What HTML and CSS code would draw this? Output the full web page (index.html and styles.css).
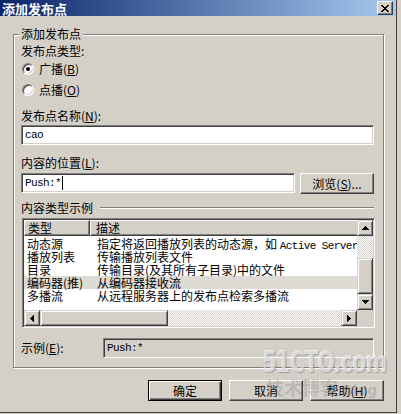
FILE: index.html
```html
<!DOCTYPE html>
<html lang="zh-CN">
<head>
    <meta charset="UTF-8">
    <title>添加发布点</title>
    <link rel="stylesheet" href="styles.css">
</head>
<body>
    <div class="dialog">
        <div class="titlebar">
            <span class="title">添加发布点</span>
            <div class="close-btn">
                <svg width="8" height="7" viewBox="0 0 8 7" shape-rendering="crispEdges">
                    <path d="M0 0h2v1H0zM6 0h2v1H6zM1 1h2v1H1zM5 1h2v1H5zM2 2h4v1H2zM3 3h2v1H3zM2 4h4v1H2zM1 5h2v1H1zM5 5h2v1H5zM0 6h2v1H0zM6 6h2v1H6z"/>
                </svg>
            </div>
        </div>

        <div class="content">
            <fieldset class="group">
                <legend>添加发布点</legend>

                <div class="label">发布点类型:</div>
                <div class="radios">
                    <div class="radio">
                        <span class="radio-box"><span class="radio-dot"></span></span>
                        <span>广播(<u>B</u>)</span>
                    </div>
                    <div class="radio">
                        <span class="radio-box"></span>
                        <span>点播(<u>O</u>)</span>
                    </div>
                </div>

                <div class="label gap-lg">发布点名称(<u>N</u>):</div>
                <div class="field full"><span class="mono">cao</span></div>

                <div class="label gap-md">内容的位置(<u>L</u>):</div>
                <div class="location-row">
                    <div class="field location"><span class="mono">Push:*</span><span class="caret"></span></div>
                    <div class="btn browse">浏览(<u>S</u>)...</div>
                </div>

                <div class="sep">
                    <span>内容类型示例</span>
                    <span class="sep-line"></span>
                </div>

                <div class="listview">
                    <div class="lv-inner">
                        <div class="lv-content">
                            <div class="lv-header">
                                <div class="hcell col1">类型</div>
                                <div class="hcell col2">描述</div>
                            </div>
                            <div class="lv-rows">
                                <div class="lv-row">
                                    <div class="col1">动态源</div>
                                    <div class="col2">指定将返回播放列表的动态源，如 <span class="mono">Active Server</span></div>
                                </div>
                                <div class="lv-row">
                                    <div class="col1">播放列表</div>
                                    <div class="col2">传输播放列表文件</div>
                                </div>
                                <div class="lv-row">
                                    <div class="col1">目录</div>
                                    <div class="col2">传输目录(及其所有子目录)中的文件</div>
                                </div>
                                <div class="lv-row selected">
                                    <div class="col1">编码器(推)</div>
                                    <div class="col2">从编码器接收流</div>
                                </div>
                                <div class="lv-row">
                                    <div class="col1">多播流</div>
                                    <div class="col2">从远程服务器上的发布点检索多播流</div>
                                </div>
                            </div>
                        </div>

                        <div class="vscroll">
                            <div class="sb-btn">
                                <svg width="7" height="4" viewBox="0 0 7 4" shape-rendering="crispEdges"><path d="M3 0h1v1h1v1h1v1h1v1H0V3h1V2h1V1h1z"/></svg>
                            </div>
                            <div class="track"></div>
                            <div class="thumb vthumb"></div>
                            <div class="sb-btn">
                                <svg width="7" height="4" viewBox="0 0 7 4" shape-rendering="crispEdges"><path d="M0 0h7v1h-1v1h-1v1h-1v1h-1V3H2V2H1V1H0z"/></svg>
                            </div>
                        </div>

                        <div class="hscroll">
                            <div class="sb-btn">
                                <svg width="4" height="7" viewBox="0 0 4 7" shape-rendering="crispEdges"><path d="M4 0v7h-1v-1h-1v-1h-1v-1H0v-1h1v-1h1v-1h1V0z"/></svg>
                            </div>
                            <div class="thumb hthumb"></div>
                            <div class="track"></div>
                            <div class="sb-btn">
                                <svg width="4" height="7" viewBox="0 0 4 7" shape-rendering="crispEdges"><path d="M0 0h1v1h1v1h1v1h1v1h-1v1h-1v1h-1v1H0z"/></svg>
                            </div>
                        </div>

                        <div class="corner"></div>
                    </div>
                </div>

                <div class="example-row">
                    <span>示例(<u>E</u>):</span>
                    <div class="field readonly"><span class="mono">Push:*</span></div>
                </div>
            </fieldset>

            <div class="buttons">
                <div class="btn default">确定</div>
                <div class="btn">取消</div>
                <div class="btn">帮助(<u>H</u>)</div>
            </div>
        </div>

        <div class="watermark">
            <div class="wm-logo">51CTO.com</div>
            <div class="wm-sub">技术博客 <span class="wm-blog">Blog</span></div>
        </div>
    </div>
</body>
</html>
```

FILE: styles.css
```css
* {
    margin: 0;
    padding: 0;
    box-sizing: border-box;
}

body {
    width: 401px;
    height: 414px;
    overflow: hidden;
    background-color: #d4d0c8;
    font-family: "Noto Sans CJK SC", sans-serif;
    font-size: 12px;
    line-height: 12px;
    color: #000;
}

u {
    text-decoration: underline;
}

.mono {
    font-family: "Liberation Mono", "Noto Sans CJK SC", monospace;
    font-size: 11px;
    letter-spacing: -0.6px;
}

.dialog {
    position: relative;
    width: 397px;
    height: 413px;
    overflow: hidden;
    background-color: #d4d0c8;
    border-right: 1px solid #404040;
    border-bottom: 1px solid #404040;
}

/* title bar */
.titlebar {
    display: flex;
    align-items: center;
    justify-content: space-between;
    height: 16px;
    padding: 0 3px 0 2px;
    background: linear-gradient(to right, #0a246a, #a6caf0);
}

.title {
    padding-top: 1px;
    color: #fff;
    font-weight: bold;
    font-size: 13px;
    line-height: 15px;
}

.close-btn {
    width: 16px;
    height: 14px;
    display: flex;
    align-items: center;
    justify-content: center;
    background-color: #d4d0c8;
    border: 1px solid;
    border-color: #fff #404040 #404040 #fff;
    box-shadow: inset -1px -1px 0 #808080;
}

/* body */
.content {
    padding: 12px 12px 0 13px;
}

.group {
    width: 371px;
    min-width: 0;
    border: 1px solid #808080;
    box-shadow: 1px 1px 0 #fff, inset 1px 1px 0 #fff;
    padding: 5px 9px 9px 7px;
}

.group legend {
    margin-left: -2px;
    padding: 0 2px;
    line-height: 12px;
    background-color: #d4d0c8;
}

.label {
    height: 12px;
    white-space: nowrap;
}

.gap-lg {
    margin-top: 14px;
}

.gap-md {
    margin-top: 12px;
}

.radios {
    margin-top: 6px;
}

.radio {
    display: flex;
    align-items: center;
    gap: 5px;
    height: 12px;
    margin-left: 1px;
}

.radio + .radio {
    margin-top: 9px;
}

.radio-box {
    width: 12px;
    height: 12px;
    display: flex;
    align-items: center;
    justify-content: center;
    border-radius: 50%;
    background-color: #fff;
    border: 1px solid;
    border-color: #808080 #fff #fff #808080;
    box-shadow: inset 1px 1px 0 #404040, inset -1px -1px 0 #d4d0c8;
}

.radio-dot {
    width: 4px;
    height: 4px;
    border-radius: 50%;
    background-color: #000;
}

/* text fields */
.field {
    height: 20px;
    display: flex;
    align-items: center;
    padding: 0 3px;
    background-color: #fff;
    border: 1px solid;
    border-color: #808080 #fff #fff #808080;
    box-shadow: inset 1px 1px 0 #404040, inset -1px -1px 0 #d4d0c8;
    white-space: nowrap;
}

.field.full {
    width: 353px;
    margin-top: 3px;
}

.location-row {
    display: flex;
    gap: 5px;
    margin-top: 4px;
}

.field.location {
    width: 274px;
}

.caret {
    width: 1px;
    height: 14px;
    margin-left: 1px;
    background-color: #000;
}

.field.readonly {
    width: 271px;
    background-color: #d4d0c8;
}

/* buttons */
.btn {
    width: 74px;
    height: 21px;
    display: flex;
    align-items: center;
    justify-content: center;
    background-color: #d4d0c8;
    border: 1px solid;
    border-color: #fff #404040 #404040 #fff;
    box-shadow: inset -1px -1px 0 #808080;
    white-space: nowrap;
}

.btn.default {
    border-color: #000;
    box-shadow: inset 1px 1px 0 #fff, inset -1px -1px 0 #404040, inset -2px -2px 0 #808080;
}

.buttons {
    display: flex;
    justify-content: flex-end;
    gap: 7px;
    margin-top: 12px;
}

/* separator */
.sep {
    display: flex;
    align-items: center;
    gap: 7px;
    height: 12px;
    margin-top: 8px;
}

.sep-line {
    flex: 1;
    height: 2px;
    border-top: 1px solid #808080;
    border-bottom: 1px solid #fff;
}

/* list view */
.listview {
    width: 353px;
    height: 110px;
    margin: 4px 0 0 1px;
    padding: 1px;
    border: 1px solid;
    border-color: #808080 #fff #fff #808080;
    box-shadow: inset 1px 1px 0 #404040, inset -1px -1px 0 #d4d0c8;
}

.lv-inner {
    display: grid;
    grid-template-columns: 1fr 16px;
    grid-template-rows: 1fr 16px;
    height: 100%;
}

.lv-content {
    background-color: #fff;
    overflow: hidden;
}

.lv-header {
    display: flex;
    height: 16px;
}

.hcell {
    height: 16px;
    line-height: 14px;
    background-color: #d4d0c8;
    border: 1px solid;
    border-color: #fff #404040 #404040 #fff;
    box-shadow: inset -1px -1px 0 #808080;
    white-space: nowrap;
}

.hcell.col1 {
    width: 66px;
    flex: none;
    padding-left: 3px;
}

.hcell.col2 {
    width: 300px;
    flex: none;
    padding-left: 5px;
}

.lv-rows {
    padding-top: 1px;
}

.lv-row {
    display: flex;
    height: 13px;
    line-height: 13px;
    white-space: nowrap;
}

.lv-row.selected {
    background-color: #dedad4;
}

.lv-row .col1 {
    width: 66px;
    flex: none;
    padding-left: 3px;
}

.lv-row .col2 {
    padding-left: 7px;
}

/* scroll bars */
.vscroll {
    display: flex;
    flex-direction: column;
}

.hscroll {
    display: flex;
}

.sb-btn {
    width: 16px;
    height: 16px;
    flex: none;
    display: flex;
    align-items: center;
    justify-content: center;
    background-color: #d4d0c8;
    border: 1px solid;
    border-color: #d4d0c8 #404040 #404040 #d4d0c8;
    box-shadow: inset 1px 1px 0 #fff, inset -1px -1px 0 #808080;
}

.track {
    flex: 1;
    background: repeating-conic-gradient(#d4d0c8 0 25%, #fff 0 50%) 0 0 / 2px 2px;
}

.thumb {
    flex: none;
    background-color: #d4d0c8;
    border: 1px solid;
    border-color: #d4d0c8 #404040 #404040 #d4d0c8;
    box-shadow: inset 1px 1px 0 #fff, inset -1px -1px 0 #808080;
}

.vthumb {
    height: 36px;
}

.vscroll .track {
    flex: none;
    height: 22px;
}

.hthumb {
    width: 128px;
}

.corner {
    background-color: #d4d0c8;
}

/* example row */
.example-row {
    display: flex;
    align-items: center;
    justify-content: space-between;
    margin-top: 10px;
    height: 20px;
}

/* watermark */
.watermark {
    position: absolute;
    left: 262px;
    top: 348px;
    pointer-events: none;
}

.wm-logo {
    font-family: "DejaVu Sans", sans-serif;
    font-weight: bold;
    font-size: 21px;
    line-height: 20px;
    letter-spacing: -1px;
    color: rgba(255, 255, 255, 0.6);
    text-shadow: 1px 1px 1px rgba(110, 110, 110, 0.5);
    transform: scaleY(1.4);
    transform-origin: left top;
    white-space: nowrap;
}

.wm-sub {
    margin: 9px 0 0 4px;
    font-size: 18px;
    line-height: 20px;
    font-weight: bold;
    color: rgba(120, 120, 120, 0.28);
    white-space: nowrap;
}

.wm-blog {
    font-family: "DejaVu Sans", sans-serif;
    font-size: 14px;
}
```
